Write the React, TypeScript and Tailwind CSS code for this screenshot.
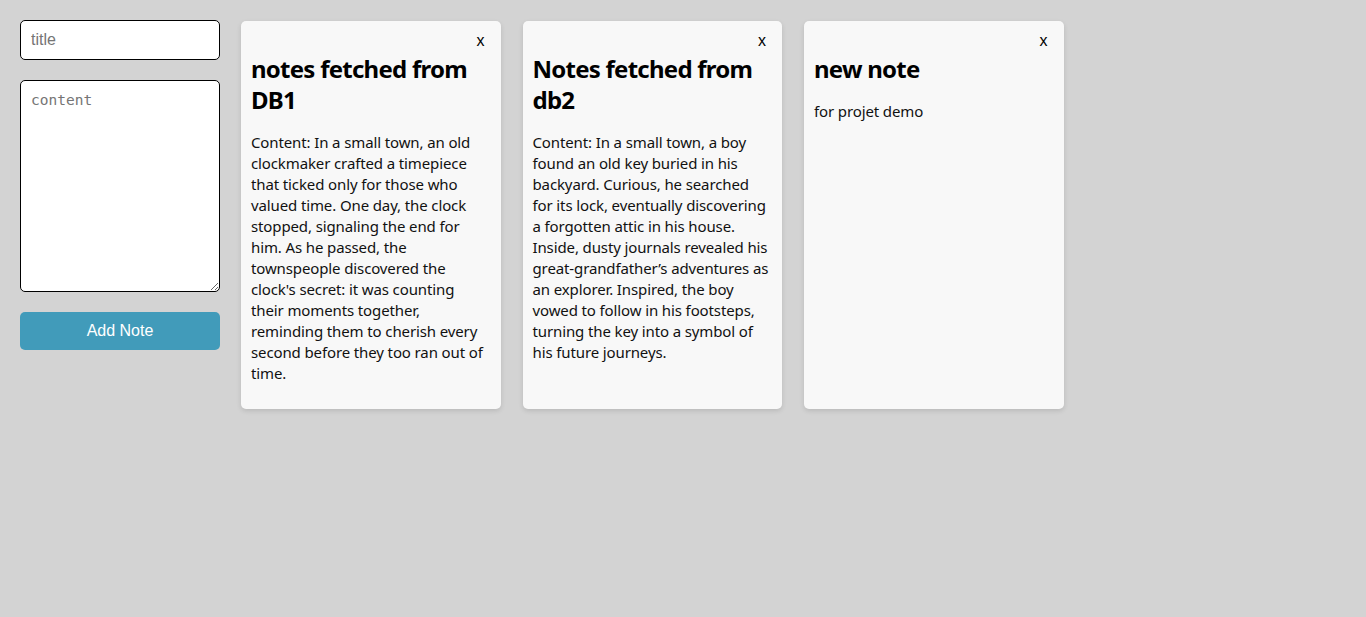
import React from "react";

const notes = [
  {
    title: "notes fetched from DB1",
    content:
      "Content: In a small town, an old clockmaker crafted a timepiece that ticked only for those who valued time. One day, the clock stopped, signaling the end for him. As he passed, the townspeople discovered the clock's secret: it was counting their moments together, reminding them to cherish every second before they too ran out of time.",
  },
  {
    title: "Notes fetched from db2",
    content:
      "Content: In a small town, a boy found an old key buried in his backyard. Curious, he searched for its lock, eventually discovering a forgotten attic in his house. Inside, dusty journals revealed his great-grandfather\u2019s adventures as an explorer. Inspired, the boy vowed to follow in his footsteps, turning the key into a symbol of his future journeys.",
  },
  { title: "new note", content: "for projet demo" },
];

export default function App() {
  return (
    <div className="min-h-[617px] w-full bg-[#d3d3d3] flex items-start gap-[21px] p-5 font-['Noto_Sans',sans-serif]">
      <div className="w-[200px] flex flex-col shrink-0">
        <input
          placeholder="title"
          className="h-10 w-full rounded-[5px] border border-black bg-white px-[10px] text-[16px] font-['Liberation_Sans',Arial,sans-serif] placeholder:text-[#757575] outline-none"
        />
        <textarea
          placeholder="content"
          className="mt-5 h-[212px] w-full rounded-[5px] border border-black bg-white px-[10px] py-[10px] text-[14.5px] leading-[18px] font-['DejaVu_Sans_Mono',monospace] placeholder:text-[#757575] outline-none"
        />
        <button className="mt-5 h-[38px] w-full rounded-[5px] bg-[#419bba] text-white text-[16px] font-['Liberation_Sans',Arial,sans-serif]">
          Add Note
        </button>
      </div>
      <div className="flex items-stretch gap-[22px] mt-[1px]">
        {notes.map((n) => (
          <div
            key={n.title}
            className="w-[259.5px] rounded-[5px] bg-[#f8f8f8] px-[10px] pt-[10px] pb-[10px] shadow-[0_2px_5px_rgba(0,0,0,0.12)]"
          >
            <div className="flex justify-end">
              <button className="h-[20px] px-[6px] text-[16px] leading-[20px] text-black font-['Liberation_Sans',Arial,sans-serif]">
                x
              </button>
            </div>
            <h1 className="mt-[1.5px] text-[24px] leading-[31px] font-bold text-black tracking-[-0.75px]">
              {n.title}
            </h1>
            <p className="mt-[17px] mb-[15.5px] text-[15px] leading-[21px] text-[#111] tracking-[-0.12px]">
              {n.content}
            </p>
          </div>
        ))}
      </div>
    </div>
  );
}
